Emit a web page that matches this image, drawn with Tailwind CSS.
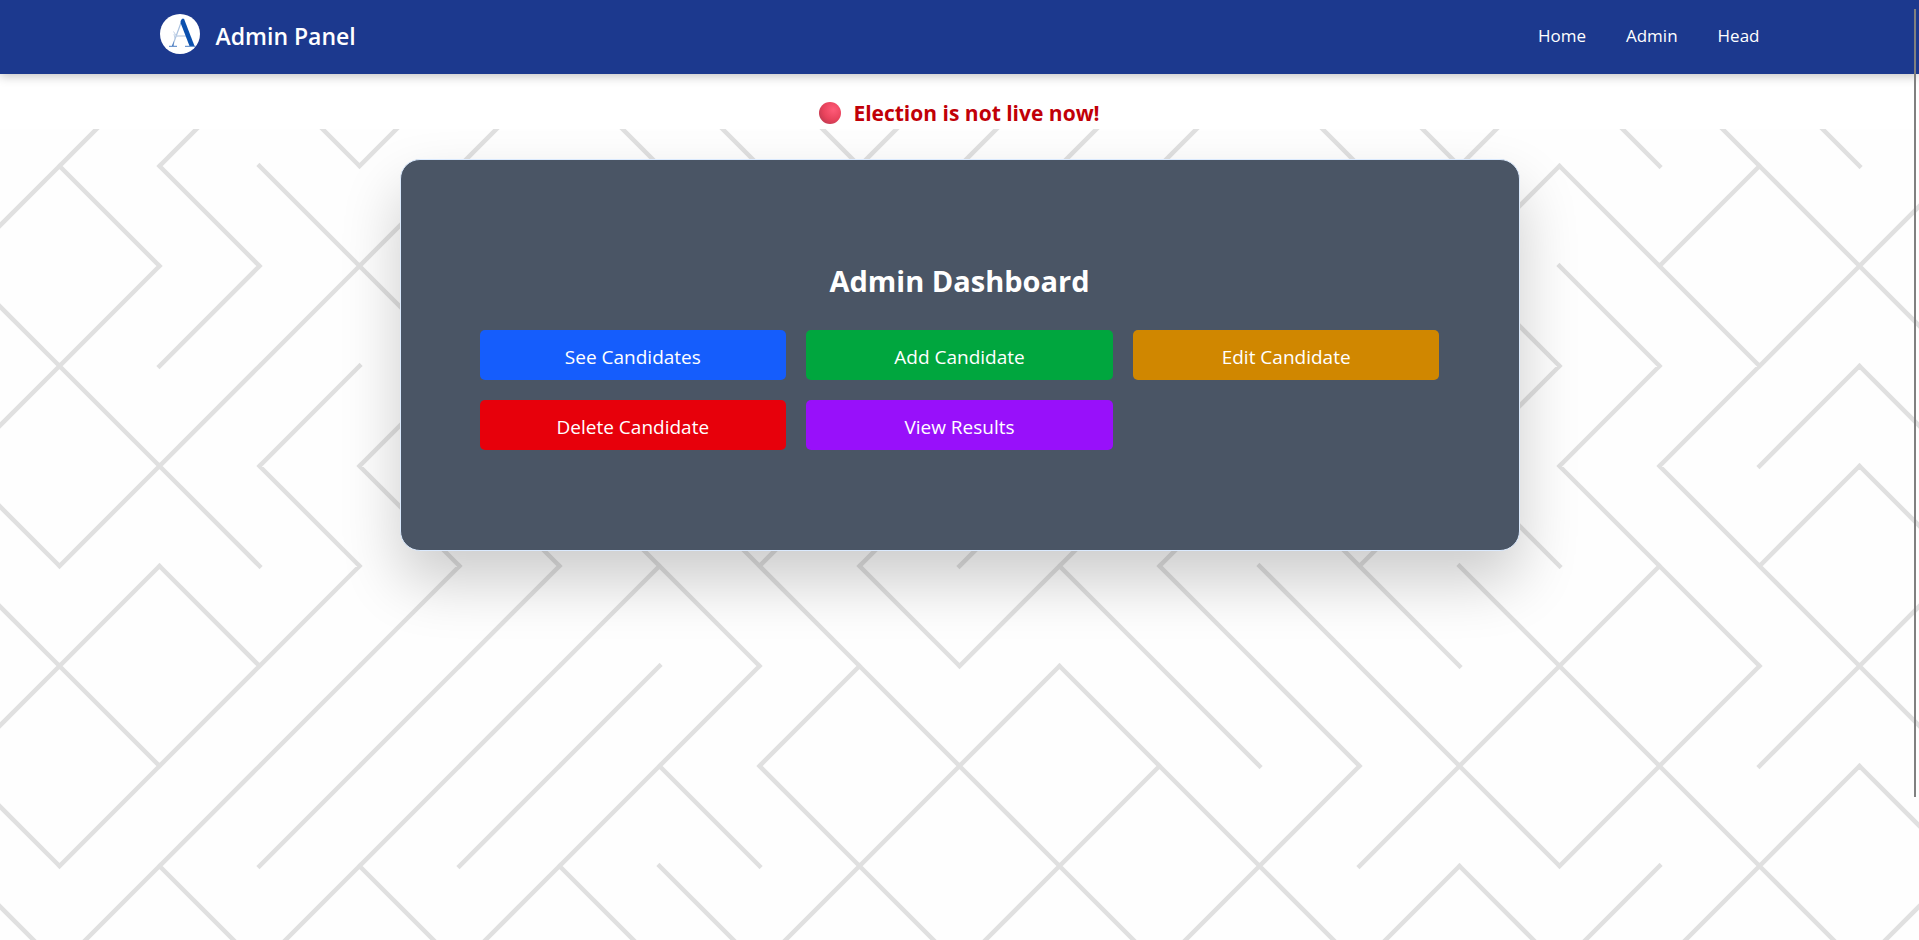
<!DOCTYPE html>
<html lang="en">
<head>
<meta charset="utf-8">
<meta name="viewport" content="width=device-width, initial-scale=1">
<title>Admin Panel</title>
<script src="https://cdn.jsdelivr.net/npm/@tailwindcss/browser@4"></script>
</head>
<body class="flex min-h-screen flex-col bg-white font-['Open_Sans',sans-serif]">
<header class="relative z-10 bg-blue-900 px-6 text-white shadow-[0_2px_10px_rgba(0,0,0,0.25)]">
  <div class="mx-auto flex h-[74px] max-w-[1600px] items-center justify-between pb-0.5">
    <div class="flex items-center gap-4">
      <svg class="mb-1 size-10" viewBox="0 0 40 40" role="img" aria-label="Logo">
        <circle cx="20" cy="20" r="20" fill="#fff"/>
        <path d="M22 6L12.500 32M15.500 22H27" stroke="#a9c0de" stroke-width="1.200" fill="none"/>
        <path d="M20.600 7L22 4.800H24L34.500 32H29.500L20.800 9.500Z" fill="#0b50ae"/>
        <path d="M13.800 27L12 32H13.500Z" fill="#3f74bd"/>
        <path d="M9 32.300H17M25 32.300H35.500" stroke="#4a7dc2" stroke-width="1"/>
        <path d="M13.500 17.500L17 23M14 20L15 25" stroke="#c3d3e8" stroke-width="1"/>
      </svg>
      <span class="text-[23px] leading-8 font-semibold">Admin Panel</span>
    </div>
    <nav class="flex gap-10 text-[17px] leading-7">
      <a href="#">Home</a>
      <a href="#">Admin</a>
      <a href="#">Head</a>
    </nav>
  </div>
</header>

<div class="flex h-[55px] items-end justify-center gap-3 text-[#c10007]">
  <span class="mb-[5px] size-[22px] rounded-full bg-[radial-gradient(circle_at_65%_35%,#ff5b78,#e8435c_50%,#a83248)]"></span>
  <p class="text-[21px] leading-8 font-bold">Election is not live now!</p>
</div>

<main class="relative isolate grow overflow-x-clip bg-[#fefefe] px-6 pt-[30px] pb-20">
  <svg class="absolute inset-0 -z-10 size-full" aria-hidden="true">
    <svg x="50%" overflow="visible">
      <path id="maze" fill="none" stroke="#e0e0e0" stroke-width="4.500" stroke-linecap="square"/>
    </svg>
  </svg>
  <section class="mx-auto max-w-[1120px] rounded-[20px] border border-blue-100 bg-gray-600 px-[79px] pt-[101px] pb-[100px] text-white shadow-[0_30px_60px_rgba(0,0,0,0.2)]">
    <h1 class="mb-[29px] text-center text-[29px] leading-10 font-bold">Admin Dashboard</h1>
    <div class="grid grid-cols-3 gap-5 text-[19px] leading-7">
      <button type="button" class="h-[50px] rounded-[5px] bg-blue-600 pt-1">See Candidates</button>
      <button type="button" class="h-[50px] rounded-[5px] bg-green-600 pt-1">Add Candidate</button>
      <button type="button" class="h-[50px] rounded-[5px] bg-yellow-600 pt-1">Edit Candidate</button>
      <button type="button" class="h-[50px] rounded-[5px] bg-red-600 pt-1">Delete Candidate</button>
      <button type="button" class="h-[50px] rounded-[5px] bg-purple-600 pt-1">View Results</button>
    </div>
  </section>
</main>

<div class="fixed top-[9px] right-[3px] z-20 h-[788px] w-0.5 bg-[#808080]" aria-hidden="true"></div>

<script>
// Maze backdrop: each 100px cell holds one diagonal, "/" or "b" (backslash).
const rows = [
  '///b//bbb////bb/bbbb',
  '/bbb////////////b/b/',
  'b///b//////////bbb/b',
  '/b/////////////////b',
  'b/bbbbbb/////b/bbb/b',
  'b/b////bbb/bbbbb/bb/',
  '/b///////b/bbbb/b//b',
  'b//////bb/b/b//b/b/b',
  'b/b/b/bb/b/b/b/b//b/'
];
const d = [];
rows.forEach((row, r) => [...row].forEach((cell, c) => {
  const x = (c - 10) * 100, y = r * 100 - 63;
  d.push(cell === '/' ? `M${x} ${y + 100}l100-100` : `M${x} ${y}l100 100`);
}));
document.getElementById('maze').setAttribute('d', d.join(''));
</script>
</body>
</html>
